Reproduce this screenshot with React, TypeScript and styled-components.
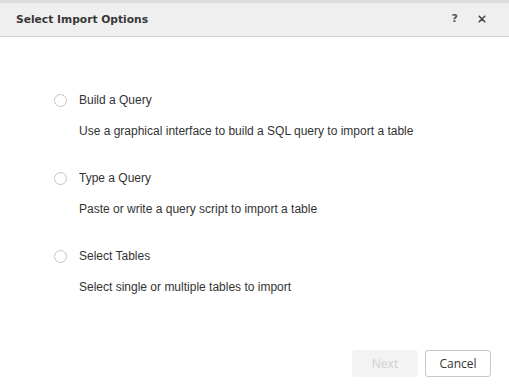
import styled, { createGlobalStyle } from "styled-components";

const GlobalStyle = createGlobalStyle`
  html, body {
    margin: 0;
    padding: 0;
    background: #ffffff;
  }
`;

const options = [
  {
    label: "Build a Query",
    description: "Use a graphical interface to build a SQL query to import a table",
  },
  {
    label: "Type a Query",
    description: "Paste or write a query script to import a table",
  },
  {
    label: "Select Tables",
    description: "Select single or multiple tables to import",
  },
];

const App = () => {
  return (
    <>
      <GlobalStyle />
      <Dialog>
        <Header>
          <HeaderTitle>Select Import Options</HeaderTitle>
          <HeaderActions>
            <HelpButton>?</HelpButton>
            <CloseButton>
              <svg width="8" height="8" viewBox="0 0 8 8">
                <path
                  d="M1.2 1.2 L6.8 6.8 M6.8 1.2 L1.2 6.8"
                  stroke="#4a4a4a"
                  strokeWidth="1.6"
                  strokeLinecap="round"
                />
              </svg>
            </CloseButton>
          </HeaderActions>
        </Header>

        <Body>
          {options.map((option) => (
            <Option key={option.label}>
              <OptionRow>
                <Radio />
                <OptionLabel>{option.label}</OptionLabel>
              </OptionRow>
              <OptionDescription>{option.description}</OptionDescription>
            </Option>
          ))}
        </Body>

        <Footer>
          <Button disabled>Next</Button>
          <Button>Cancel</Button>
        </Footer>
      </Dialog>
    </>
  );
};

export default App;

const Dialog = styled.div`
  width: 509px;
  height: 392px;
  display: flex;
  flex-direction: column;
  background: #fff;
  border-top: 3px solid #dcdcdc;
  box-sizing: border-box;
`;

const Header = styled.div`
  height: 33px;
  display: flex;
  align-items: center;
  justify-content: space-between;
  padding: 0 23px 0 16px;
  background: #efefef;
  border-bottom: 1px solid #cfcfcf;
  flex-shrink: 0;
`;

const HeaderTitle = styled.div`
  font-family: "DejaVu Sans", Verdana, sans-serif;
  font-size: 10.7px;
  font-weight: bold;
  color: #383838;
`;

const HeaderActions = styled.div`
  display: flex;
  align-items: center;
  gap: 20px;
  padding-bottom: 2px;
`;

const HelpButton = styled.span`
  font-family: "DejaVu Sans", Verdana, sans-serif;
  font-size: 11px;
  font-weight: bold;
  color: #555;
  cursor: pointer;
`;

const CloseButton = styled.span`
  display: flex;
  align-items: center;
  cursor: pointer;
`;

const Body = styled.div`
  flex: 1;
  display: flex;
  flex-direction: column;
  gap: 31px;
  padding: 55px 0 0 54px;
`;

const Option = styled.div`
  display: flex;
  flex-direction: column;
  gap: 15px;
`;

const OptionRow = styled.label`
  display: flex;
  align-items: center;
  gap: 12px;
  cursor: pointer;
`;

const Radio = styled.span`
  width: 11px;
  height: 11px;
  border: 1px solid #c4c4c4;
  border-radius: 50%;
  background: #fff;
`;

const OptionLabel = styled.span`
  font-family: "Liberation Sans", Arial, sans-serif;
  font-size: 12px;
  color: #333;
  line-height: 16px;
`;

const OptionDescription = styled.div`
  font-family: "Liberation Sans", Arial, sans-serif;
  font-size: 12px;
  color: #333;
  line-height: 16px;
  padding-left: 25px;
`;

const Footer = styled.div`
  display: flex;
  justify-content: flex-end;
  gap: 7px;
  padding: 0 18px 15px 0;
`;

const Button = styled.button`
  width: 66px;
  height: 27px;
  border-radius: 3px;
  font-family: "Open Sans", sans-serif;
  font-size: 12px;
  color: #333;
  background: #fff;
  border: 1px solid #c8c8c8;
  cursor: pointer;

  &:disabled {
    background: #f3f3f3;
    border-color: #f3f3f3;
    color: #d0d0d0;
    cursor: default;
  }
`;
